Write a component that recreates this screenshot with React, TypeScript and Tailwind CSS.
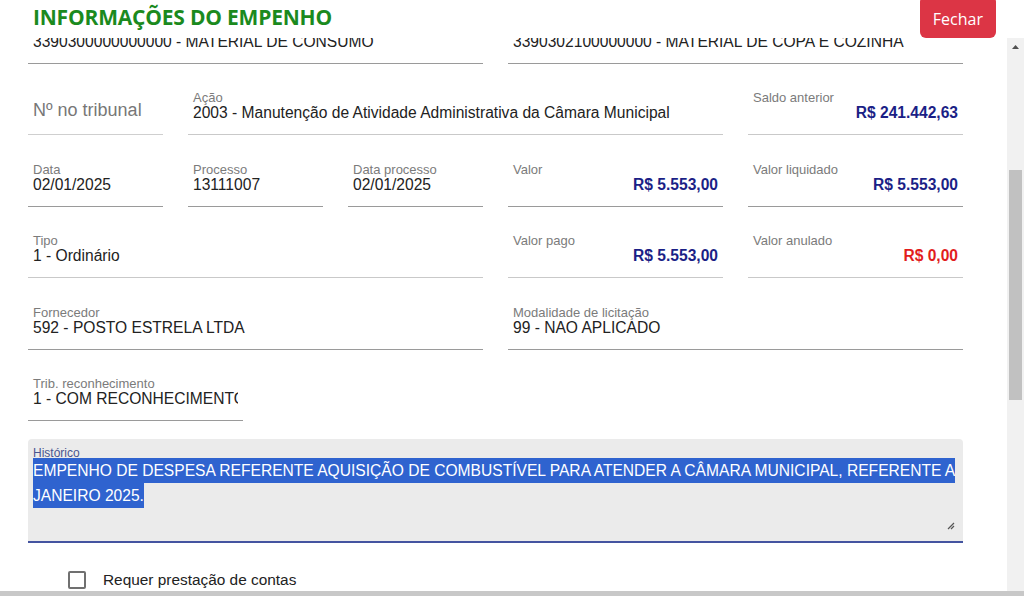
import React from "react";

type FieldProps = {
  label: string;
  value: string;
  span: string;
  money?: "blue" | "red";
  light?: boolean;
};

function Field({ label, value, span, money, light }: FieldProps) {
  return (
    <div
      className={`${span} min-w-0 border-b px-[5px] pb-[12px] ${
        light ? "border-[#c9c9c9]" : "border-[#9a9a9a]"
      }`}
    >
      <div className="h-[12px] text-[13px] leading-[12px] text-[#7b7b7b]">
        {label}
      </div>
      <div
        className={`h-[18px] overflow-hidden whitespace-nowrap text-[15.6px] leading-[18px] ${
          money === "blue"
            ? "text-right font-bold text-[#1b1f86]"
            : money === "red"
              ? "text-right font-bold text-[#e21d1d]"
              : "text-[#222]"
        }`}
      >
        {value}
      </div>
    </div>
  );
}

export default function App() {
  return (
    <div className="flex h-[596px] w-[1024px] flex-col overflow-hidden bg-white font-['Liberation_Sans',Arial,sans-serif]">
      <header className="flex h-[38px] shrink-0 items-start justify-between">
        <h1 className="pl-[33px] pt-[1px] font-['Open_Sans',sans-serif] text-[21px] leading-[32px] font-bold tracking-[-0.2px] text-[#1b8a1e]">
          INFORMAÇÕES DO EMPENHO
        </h1>
        <button className="mr-[28px] -mt-[4px] h-[42px] rounded-md bg-[#dc3545] px-[13px] pt-[3px] font-['Open_Sans',sans-serif] text-[16px] text-white">
          Fechar
        </button>
      </header>

      <div className="flex min-h-0 flex-1">
        <main className="min-w-0 flex-1 overflow-hidden">
          <div className="-mt-[17.5px] w-[963px] pl-[28px]">
            <div className="grid grid-cols-12 gap-x-[25px] gap-y-[28.5px]">
              <Field
                span="col-span-6"
                label="Elemento de despesa"
                value="3390300000000000 - MATERIAL DE CONSUMO"
              />
              <Field
                span="col-span-6"
                label="Subelemento"
                value="3390302100000000 - MATERIAL DE COPA E COZINHA"
              />

              <div className="col-span-2 border-b border-[#cfcfcf] px-[5px] pb-[12px]">
                <div className="pt-[6px] text-[18px] leading-[24px] text-[#777]">
                  Nº no tribunal
                </div>
              </div>
              <Field
                span="col-span-7"
                label="Ação"
                value="2003 - Manutenção de Atividade Administrativa da Câmara Municipal"
                light
              />
              <Field
                span="col-span-3"
                label="Saldo anterior"
                value="R$ 241.442,63"
                money="blue"
                light
              />

              <Field span="col-span-2" label="Data" value="02/01/2025" />
              <Field span="col-span-2" label="Processo" value="13111007" />
              <Field span="col-span-2" label="Data processo" value="02/01/2025" />
              <Field span="col-span-3" label="Valor" value="R$ 5.553,00" money="blue" />
              <Field
                span="col-span-3"
                label="Valor liquidado"
                value="R$ 5.553,00"
                money="blue"
              />

              <Field span="col-span-6" label="Tipo" value="1 - Ordinário" light />
              <Field
                span="col-span-3"
                label="Valor pago"
                value="R$ 5.553,00"
                money="blue"
                light
              />
              <Field
                span="col-span-3"
                label="Valor anulado"
                value="R$ 0,00"
                money="red"
                light
              />

              <Field
                span="col-span-6"
                label="Fornecedor"
                value="592 - POSTO ESTRELA LTDA"
              />
              <Field
                span="col-span-6"
                label="Modalidade de licitação"
                value="99 - NAO APLICADO"
              />

              <Field
                span="col-span-3"
                label="Trib. reconhecimento"
                value="1 - COM RECONHECIMENTO"
              />
            </div>

            <div className="relative mt-[18px] h-[104px] rounded-t-[4px] border-b-2 border-[#4454a0] bg-[#ebebeb] px-[5px] pt-[9px]">
              <div className="h-[10px] text-[12px] leading-[10px] text-[#4a5590]">
                Histórico
              </div>
              <div className="text-[15.6px] leading-[25px] text-white">
                <div className="w-fit whitespace-nowrap bg-[#2f63cf]">
                  EMPENHO DE DESPESA REFERENTE AQUISIÇÃO DE COMBUSTÍVEL PARA
                  ATENDER A CÂMARA MUNICIPAL, REFERENTE A
                </div>
                <div className="w-fit bg-[#2f63cf]">JANEIRO 2025.</div>
              </div>
              <svg
                className="absolute bottom-[11px] right-[8px]"
                width="8"
                height="8"
                viewBox="0 0 8 8"
              >
                <path
                  d="M1 7 L7 1 M4 7 L7 4"
                  stroke="#555"
                  strokeWidth="1.2"
                  fill="none"
                />
              </svg>
            </div>

            <label className="mt-[28px] flex items-center gap-[17px] pl-[40px]">
              <span className="h-[18px] w-[18px] rounded-[2px] border-2 border-[#707070] bg-white" />
              <span className="text-[15.4px] leading-[18px] text-[#222]">
                Requer prestação de contas
              </span>
            </label>
          </div>
        </main>

        <div className="flex w-[17px] shrink-0 flex-col bg-[#f1f1f1]">
          <div className="flex h-[17px] items-center justify-center">
            <svg width="7" height="4" viewBox="0 0 7 4">
              <path d="M0 4 L3.5 0 L7 4 Z" fill="#505050" />
            </svg>
          </div>
          <div className="h-[115px]" />
          <div className="mx-[2px] h-[230px] bg-[#c1c1c1]" />
        </div>
      </div>

      <div className="h-[5px] shrink-0 bg-[#c8c8c8]" />
    </div>
  );
}
